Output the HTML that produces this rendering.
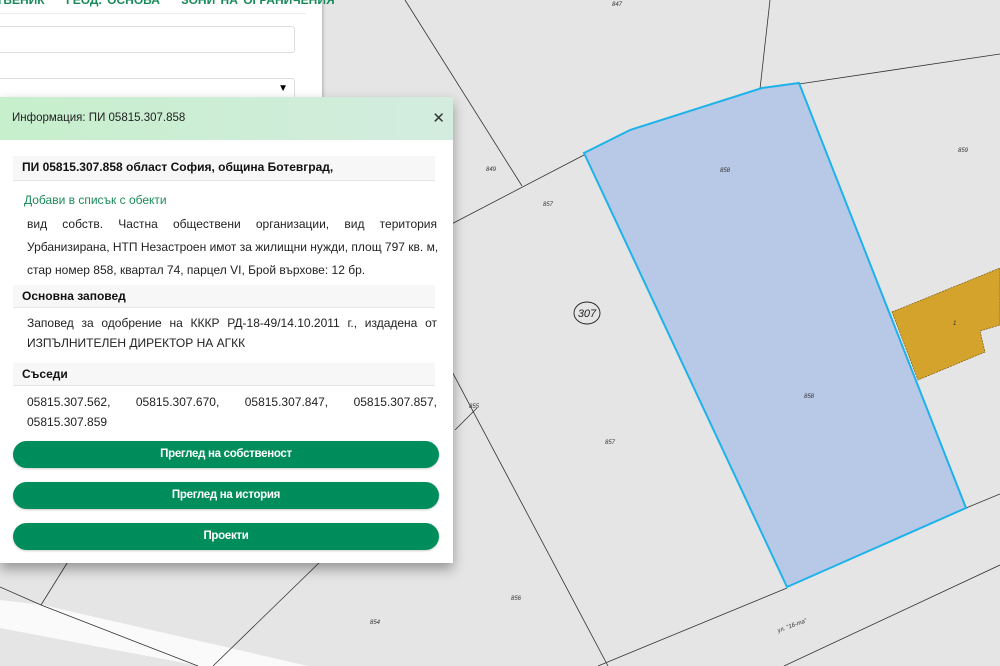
<!DOCTYPE html>
<html><head><meta charset="utf-8"><style>
body{margin:0;width:1000px;height:666px;overflow:hidden;background:#e5e5e5;font-family:"Liberation Sans","DejaVu Sans",sans-serif;position:relative}
svg.map{position:absolute;left:0;top:0}
.side{position:absolute;left:0;top:0;width:322px;height:120px;background:#fff;box-shadow:1px 0 3px rgba(0,0,0,.25)}
.tabs{position:absolute;top:-7px;left:-4px;font-size:12px;color:#1a8a5a;font-weight:bold;white-space:nowrap;word-spacing:2px}
.tabline{position:absolute;left:0;top:13px;width:306px;height:1px;background:#eee}
.inp{position:absolute;left:-5px;top:26px;width:298px;height:25px;border:1px solid #ddd;border-radius:3px;background:#fff}
.sel{position:absolute;left:-5px;top:78px;width:298px;height:24px;border:1px solid #ddd;border-radius:3px;background:#fff}
.sel span{position:absolute;right:6px;top:4px;font-size:10px}
.pop{position:absolute;left:0;top:97px;width:453px;height:466px;background:#fff;box-shadow:0 6px 12px rgba(0,0,0,.35)}
.hd{height:43px;background:linear-gradient(90deg,#c7efcc,#d3ecdf);font-size:11.5px;line-height:43px;padding-left:12px;position:relative;color:#222}
.hd b{position:absolute;right:8px;top:0;font-size:15px;color:#333}
.bar{position:absolute;left:13px;width:413px;background:#f7f7f7;border-bottom:1px solid #e6e6e6;font-weight:bold;font-size:12px;padding-left:9px;color:#111}
.p{position:absolute;left:27px;width:410px;font-size:12px;line-height:20px;color:#222;white-space:nowrap}
.p .j{display:block;text-align:justify;text-align-last:justify}
.btn{position:absolute;left:13px;width:426px;height:27px;border-radius:14px;background:#008d5c;color:#fff;font-weight:bold;font-size:11.5px;text-align:center;line-height:27px;letter-spacing:-.3px;box-shadow:0 1px 2px rgba(0,0,0,.2)}
</style></head><body>
<svg class="map" width="1000" height="666" viewBox="0 0 1000 666">
<polygon points="0,600 43,605 308,666 200,666 0,628" fill="#fafafa"/>
<g stroke="#333" stroke-width="0.8" fill="none">
<line x1="770" y1="0" x2="760" y2="89"/>
<line x1="799" y1="84" x2="1000" y2="54"/>
<line x1="405" y1="0" x2="522" y2="186"/>
<line x1="440" y1="230" x2="584" y2="155"/>
<line x1="430" y1="330" x2="608" y2="666"/>
<line x1="455" y1="430" x2="477" y2="408"/>
<line x1="787" y1="588" x2="598" y2="666"/>
<line x1="966" y1="508" x2="1000" y2="494"/>
<line x1="784" y1="666" x2="1000" y2="565"/>
<polyline points="0,587 41,605 198,666"/>
<line x1="41" y1="605" x2="69" y2="560"/>
<line x1="213" y1="666" x2="322" y2="560"/>
</g>
<polygon points="892,312 1000,268 1000,325 980,331 985,352 918,380" fill="#d4a32b" stroke="#7a5a10" stroke-width="0.7" stroke-dasharray="2,1"/>
<polygon points="584,153 630,130 762,88 799,83 966,508 787,587" fill="#b7c9e6" stroke="#1eb2ea" stroke-width="2"/>
<g font-size="6" font-style="italic" fill="#333" font-family="Liberation Sans">
<text x="612" y="6">847</text><text x="486" y="171">849</text><text x="543" y="206">857</text>
<text x="720" y="172">858</text><text x="958" y="152">859</text><text x="469" y="408">855</text>
<text x="605" y="444">857</text><text x="804" y="398">858</text><text x="511" y="600">856</text>
<text x="370" y="624">854</text><text x="953" y="325">1</text>
<text x="776" y="628" transform="rotate(-20 790 624)">ул. "16-та"</text>
</g>
<ellipse cx="587" cy="313" rx="13" ry="11" fill="none" stroke="#222" stroke-width="0.9"/>
<text x="587" y="317" font-size="11" font-style="italic" text-anchor="middle" fill="#222" font-family="Liberation Sans">307</text>
</svg>
<div class="side">
<div class="tabs">ТВЕНИК &nbsp;&nbsp; ГЕОД. ОСНОВА &nbsp;&nbsp; ЗОНИ НА ОГРАНИЧЕНИЯ</div>
<div class="tabline"></div>
<div class="inp"></div>
<div class="sel"><span>▼</span></div>
</div>
<div class="pop">
<div class="hd">Информация: ПИ 05815.307.858<b>✕</b></div>
<div class="bar" style="top:59px;height:24px;line-height:22px">ПИ 05815.307.858 област София, община Ботевград,</div>
<div class="p" style="left:24px;top:93px;color:#1a8a5a">Добави в списък с обекти</div>
<div class="p" style="top:116px;line-height:23px"><span class="j">вид собств. Частна обществени организации, вид територия</span><span class="j">Урбанизирана, НТП Незастроен имот за жилищни нужди, площ 797 кв. м,</span><span>стар номер 858, квартал 74, парцел VI, Брой върхове: 12 бр.</span></div>
<div class="bar" style="top:188px;height:22px;line-height:22px">Основна заповед</div>
<div class="p" style="top:216px"><span class="j">Заповед за одобрение на КККР РД-18-49/14.10.2011 г., издадена от</span><span>ИЗПЪЛНИТЕЛЕН ДИРЕКТОР НА АГКК</span></div>
<div class="bar" style="top:266px;height:22px;line-height:22px">Съседи</div>
<div class="p" style="top:295px"><span class="j">05815.307.562, 05815.307.670, 05815.307.847, 05815.307.857,</span><span>05815.307.859</span></div>
<div class="btn" style="top:344px">Преглед на собственост</div>
<div class="btn" style="top:385px">Преглед на история</div>
<div class="btn" style="top:426px">Проекти</div>
</div>
</body></html>
